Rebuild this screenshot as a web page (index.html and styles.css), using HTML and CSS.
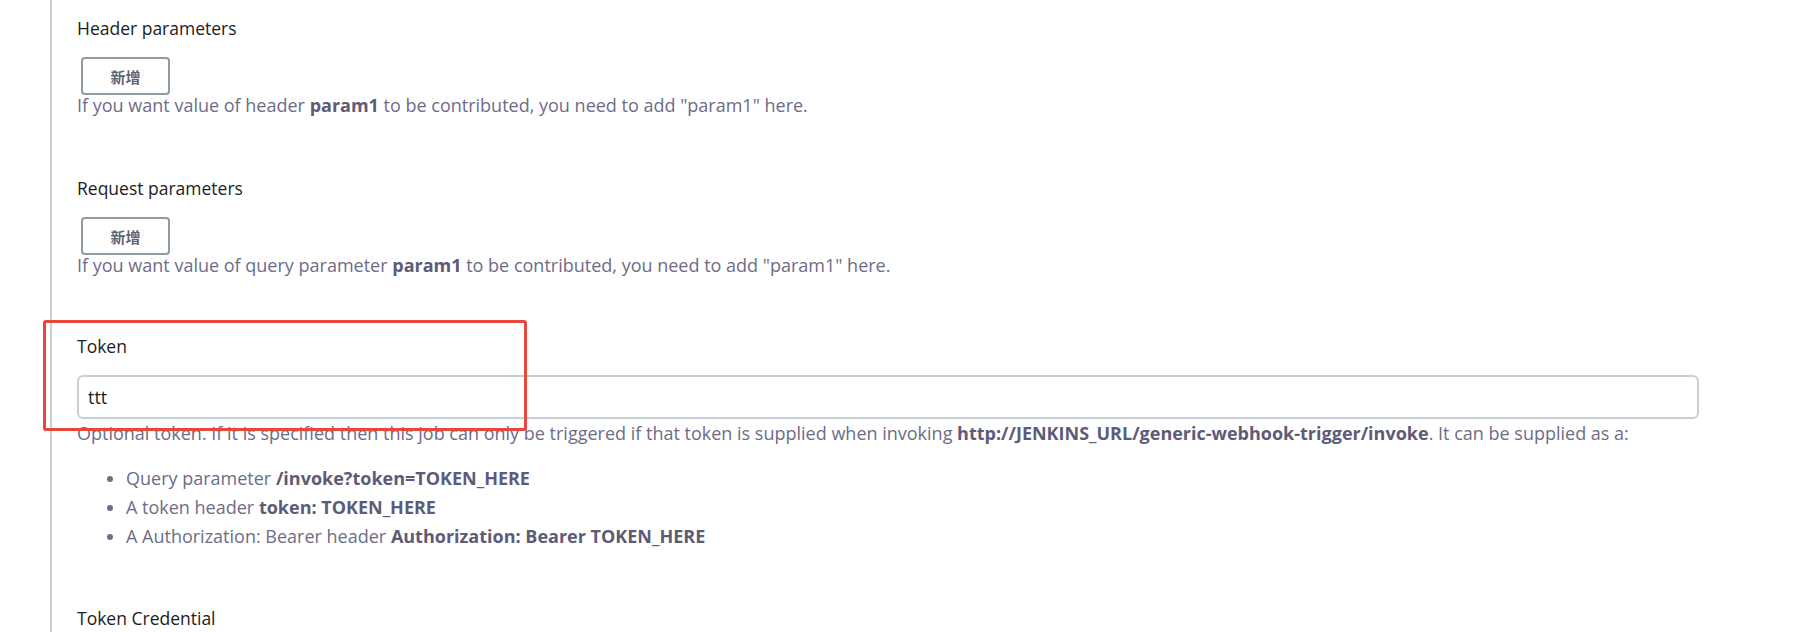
FILE: index.html
```html
<!DOCTYPE html>
<html lang="en">
<head>
<meta charset="utf-8">
<title>Generic Webhook Trigger</title>
<link rel="stylesheet" href="styles.css">
</head>
<body>
<div class="panel">
  <div class="setting first">
    <div class="setting-name">Header parameters</div>
    <button class="repeat-add" type="button">新增</button>
    <div class="help">If you want value of header <b>param1</b> to be contributed, you need to add "param1" here.</div>
  </div>
  <div class="setting">
    <div class="setting-name">Request parameters</div>
    <button class="repeat-add" type="button">新增</button>
    <div class="help">If you want value of query parameter <b>param1</b> to be contributed, you need to add "param1" here.</div>
  </div>
  <div class="setting token">
    <div class="setting-name">Token</div>
    <input class="text-input" type="text" value="ttt">
    <div class="help">Optional token. If it is specified then this job can only be triggered if that token is supplied when invoking <b>http://JENKINS_URL/generic-webhook-trigger/invoke</b>. It can be supplied as a:</div>
    <ul class="help-list">
      <li>Query parameter <b>/invoke?token=TOKEN_HERE</b></li>
      <li>A token header <b>token: TOKEN_HERE</b></li>
      <li>A Authorization: Bearer header <b>Authorization: Bearer TOKEN_HERE</b></li>
    </ul>
    <div class="highlight"></div>
  </div>
  <div class="setting last">
    <div class="setting-name">Token Credential</div>
  </div>
</div>
</body>
</html>
```
FILE: styles.css
```css
html, body {
  margin: 0;
  padding: 0;
  background: #ffffff;
}
body {
  font-family: "Open Sans", "Noto Sans", "Noto Sans CJK SC", sans-serif;
  font-size: 18px;
  color: #1c1c22;
  overflow: hidden;
  height: 632px;
}
.panel {
  margin-left: 50px;
  border-left: 2px solid #c9d1d6;
  padding-left: 25px;
  padding-top: 18px;
  min-height: 700px;
  box-sizing: border-box;
}
.setting {
  position: relative;
  margin-top: 63px;
}
.setting.first {
  margin-top: 0;
}
.setting.token {
  margin-top: 61px;
}
.setting.last {
  margin-top: 57px;
}
.setting-name {
  font-size: 17.5px;
  line-height: 20px;
  color: #1c1c22;
}
.repeat-add {
  display: block;
  margin: 19px 0 0 4px;
  width: 89px;
  height: 38px;
  background: #ffffff;
  border: 2px solid #8f9ba5;
  border-radius: 4px;
  font-family: "Noto Sans CJK SC", sans-serif;
  font-weight: 700;
  font-size: 15px;
  color: #5f6672;
  padding: 0;
}
.help {
  margin-top: 0;
  line-height: 20px;
  color: #6e6c87;
}
.help b {
  color: #5d5b77;
  font-weight: 700;
}
.text-input {
  display: block;
  box-sizing: border-box;
  margin-top: 19px;
  width: 1622px;
  height: 44px;
  border: 2px solid #c7d0d5;
  border-radius: 6px;
  padding: 0 9px;
  font-family: "Open Sans", "Noto Sans", sans-serif;
  font-size: 18px;
  color: #1c1c22;
  background: #ffffff;
  outline: none;
}
.token .help {
  margin-top: 4px;
}
.help-list {
  margin: 21px 0 0 0;
  padding-left: 49px;
  color: #6e6c87;
}
.help-list li {
  line-height: 29px;
}
.help-list li::marker {
  color: #6e6c87;
}
.help-list b {
  color: #5d5b77;
}
.highlight {
  position: absolute;
  left: -34px;
  top: -16px;
  width: 484px;
  height: 111px;
  box-sizing: border-box;
  border: 3px solid #e8473d;
  border-radius: 3px;
  pointer-events: none;
}
```
